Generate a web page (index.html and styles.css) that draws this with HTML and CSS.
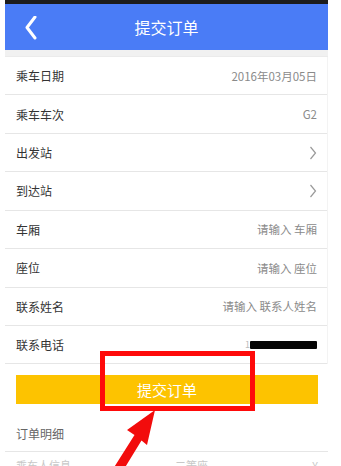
FILE: index.html
```html
<!DOCTYPE html>
<html lang="zh-CN">
<head>
<meta charset="utf-8">
<title>提交订单</title>
<link rel="stylesheet" href="styles.css">
</head>
<body>
<div class="phone">
  <div class="statusbar"></div>
  <header class="header">
    <div class="back">
      <svg width="14" height="24" viewBox="0 0 14 24"><polyline points="10,1 2,11.5 10,22" fill="none" stroke="#fff" stroke-width="3" stroke-linecap="round" stroke-linejoin="round"/></svg>
    </div>
    <div class="title">提交订单</div>
    <div class="spacer"></div>
  </header>
  <div class="band"></div>
  <div class="list">
    <div class="row"><span class="label">乘车日期</span><span class="value">2016年03月05日</span></div>
    <div class="row"><span class="label">乘车车次</span><span class="value">G2</span></div>
    <div class="row"><span class="label">出发站</span><span class="chev"><svg width="8" height="14" viewBox="0 0 8 14"><polyline points="1.5,1 6.5,7 1.5,13" fill="none" stroke="#999" stroke-width="1.2"/></svg></span></div>
    <div class="row"><span class="label">到达站</span><span class="chev"><svg width="8" height="14" viewBox="0 0 8 14"><polyline points="1.5,1 6.5,7 1.5,13" fill="none" stroke="#999" stroke-width="1.2"/></svg></span></div>
    <div class="row"><span class="label">车厢</span><span class="value">请输入 车厢</span></div>
    <div class="row"><span class="label">座位</span><span class="value">请输入 座位</span></div>
    <div class="row"><span class="label">联系姓名</span><span class="value">请输入 联系人姓名</span></div>
    <div class="row"><span class="label">联系电话</span><span class="value phone-val"><span class="one">1</span><span class="mask"></span></span></div>
  </div>
  <div class="btn-wrap"><div class="btn">提交订单</div></div>
  <div class="detail">订单明细</div>
  <div class="row faint"><span>乘车人信息</span><span>二等座</span><span>¥</span></div>
</div>
<svg class="annot" width="341" height="466" viewBox="0 0 341 466">
  <rect x="102.5" y="353.5" width="150" height="55" fill="none" stroke="#ff0a0a" stroke-width="5"/>
  <polygon points="155,410 147,445 141.5,440.5 121,474 113,469 134.5,435 127,430" fill="#f20c0c"/>
</svg>
</body>
</html>
```
FILE: styles.css
```css
html, body {
  margin: 0;
  padding: 0;
  background: #fff;
}
body {
  width: 341px;
  height: 466px;
  overflow: hidden;
  position: relative;
  font-family: "Noto Sans CJK SC", "Noto Sans", sans-serif;
}
.phone {
  margin-left: 5px;
  width: 323px;
}
.statusbar {
  height: 4px;
  background: #1c1c1c;
}
.header {
  height: 46px;
  background: #4a7cf6;
  display: grid;
  grid-template-columns: 1fr auto 1fr;
  align-items: center;
}
.back {
  padding-left: 20px;
  display: flex;
  align-items: center;
  padding-top: 2px;
}
.title {
  color: #fff;
  font-size: 16px;
  line-height: 20px;
}
.band {
  height: 6px;
  background: #f1f1f1;
  border-bottom: 1px solid #ebebeb;
}
.list {
  border-right: 1px solid #f3f3f3;
}
.row {
  height: 37.43px;
  border-bottom: 1px solid #e6e6e6;
  display: flex;
  align-items: center;
  justify-content: space-between;
  padding: 0 10px 0 11px;
}
.label {
  font-size: 12px;
  color: #333;
}
.value {
  font-size: 11.5px;
  color: #8a8a8a;
}
.chev {
  display: flex;
  align-items: center;
  padding-right: 0;
}
.phone-val {
  display: flex;
  align-items: center;
  gap: 0;
}
.one {
  color: #bbb;
  font-size: 9px;
}
.mask {
  display: inline-block;
  width: 67px;
  height: 8px;
  background: #050505;
  border-radius: 1px;
}
.btn-wrap {
  padding: 11px 10px 0 11px;
}
.btn {
  height: 29px;
  background: #fdc300;
  color: #fff;
  font-size: 15px;
  display: flex;
  align-items: center;
  justify-content: center;
}
.detail {
  height: 48px;
  box-sizing: border-box;
  padding: 22px 0 0 11px;
  font-size: 12px;
  line-height: 16px;
  color: #666;
  border-bottom: 1px solid #e6e6e6;
}
.faint {
  border-bottom: none;
  font-size: 11px;
  color: #c8c8c8;
  align-items: flex-start;
  padding-top: 5px;
}
.annot {
  position: absolute;
  left: 0;
  top: 0;
  pointer-events: none;
}
```
